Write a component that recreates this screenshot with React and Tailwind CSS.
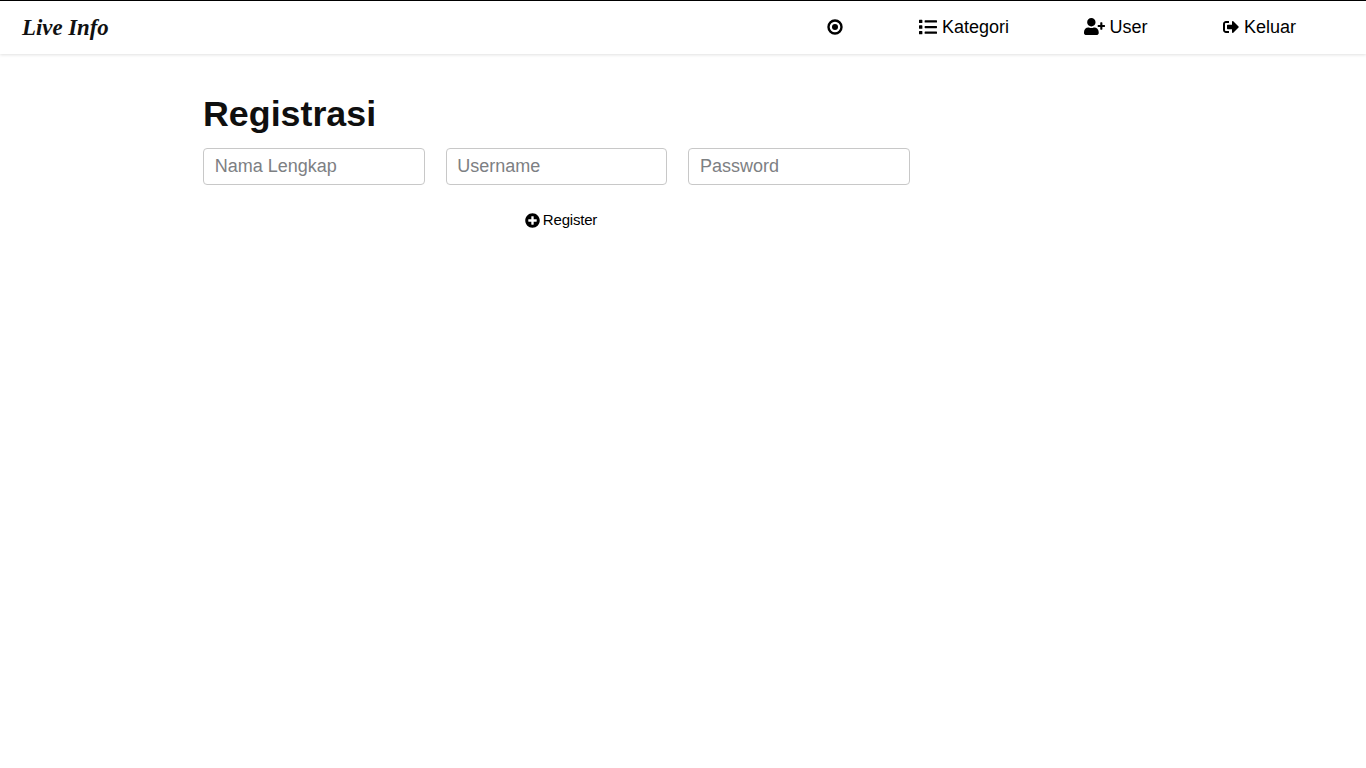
import React from "react";
import { FaList, FaUserPlus, FaSignOutAlt, FaPlusCircle } from "react-icons/fa";

const navItems = [
  { label: "Kategori", icon: FaList, size: 18, gap: "gap-[5px]" },
  { label: "User", icon: FaUserPlus, size: 21, gap: "gap-[4px]" },
  { label: "Keluar", icon: FaSignOutAlt, size: 16, gap: "gap-[5px]" },
];

const fields = ["Nama Lengkap", "Username", "Password"];

function DotCircle() {
  return (
    <svg width="16" height="16" viewBox="0 0 16 16" aria-hidden="true">
      <circle cx="8" cy="8" r="6.5" fill="none" stroke="currentColor" strokeWidth="2.4" />
      <circle cx="8" cy="8" r="3" fill="currentColor" />
    </svg>
  );
}

export default function App() {
  return (
    <div className="min-h-[768px] bg-white font-['Liberation_Sans',Arial,sans-serif] text-black">
      <nav className="flex h-[54px] items-center justify-between border-t border-black bg-white pb-[2px] pl-[22px] pr-[70px] shadow-[0_1px_3px_rgba(0,0,0,0.12)]">
        <a className="mt-[4px] font-['Liberation_Serif',serif] text-[22.8px] font-bold italic leading-none text-[#111]">Live Info</a>
        <div className="flex items-center gap-[75.5px] text-lg">
          <DotCircle />
          {navItems.map(({ label, icon: Icon, size, gap }) => (
            <a key={label} className={`flex items-center ${gap}`}>
              <Icon size={size} />
              {label}
            </a>
          ))}
        </div>
      </nav>

      <main className="ml-[203px] w-[707px] pt-[39px]">
        <h1 className="text-[35.8px] font-bold leading-[43px] text-[#0f0f0f]">Registrasi</h1>
        <form className="mt-[12px]">
          <div className="grid grid-cols-3 gap-[21px]">
            {fields.map((name) => (
              <input
                key={name}
                placeholder={name}
                type={name === "Password" ? "password" : "text"}
                className="h-[37px] w-full rounded-[4px] border border-[#c8c8c8] px-[10.7px] text-lg outline-none placeholder:text-[#7d8083]"
              />
            ))}
          </div>
          <div className="mt-[24px] flex justify-center">
            <button type="button" className="ml-[9px] flex items-center gap-[3px] text-[15px] tracking-[-0.2px]">
              <FaPlusCircle size={15} />
              Register
            </button>
          </div>
        </form>
      </main>
    </div>
  );
}
